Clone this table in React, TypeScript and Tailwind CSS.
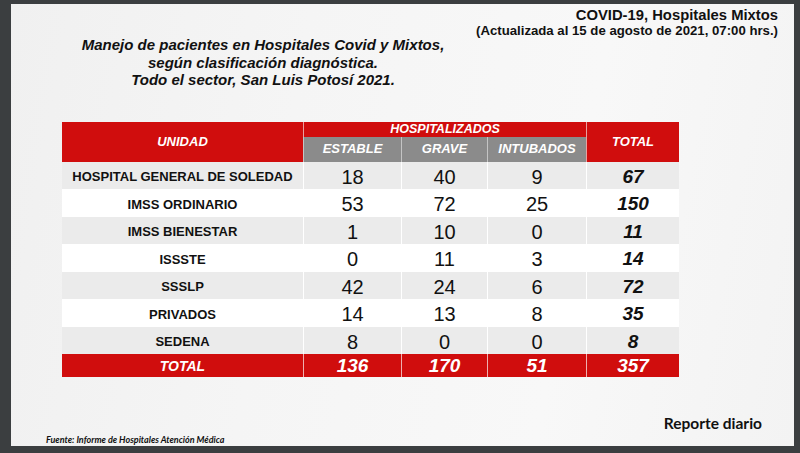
import React from "react";

const rows = [
  { name: "HOSPITAL GENERAL DE SOLEDAD", estable: 18, grave: 40, intubados: 9, total: 67 },
  { name: "IMSS ORDINARIO", estable: 53, grave: 72, intubados: 25, total: 150 },
  { name: "IMSS BIENESTAR", estable: 1, grave: 10, intubados: 0, total: 11 },
  { name: "ISSSTE", estable: 0, grave: 11, intubados: 3, total: 14 },
  { name: "SSSLP", estable: 42, grave: 24, intubados: 6, total: 72 },
  { name: "PRIVADOS", estable: 14, grave: 13, intubados: 8, total: 35 },
  { name: "SEDENA", estable: 8, grave: 0, intubados: 0, total: 8 },
];

const App = () => {
  return (
    <div className="w-[800px] h-[453px] bg-[#3b3e40] pt-[4px] pl-[11px] pr-[6px] pb-[7px] font-['Liberation_Sans',Arial,sans-serif]">
      <div className="h-full flex flex-col bg-[linear-gradient(100deg,#f0f0f0_0%,#f5f5f5_35%,#f8f8f8_70%,#f3f3f3_100%)] text-[#111]">
        {/* header */}
        <div className="flex justify-between items-start">
          <div className="ml-[64px] w-[376px] pt-[32px] text-center text-[15px] leading-[17.5px] font-bold italic whitespace-nowrap">
            <p>Manejo de pacientes en Hospitales Covid y Mixtos,</p>
            <p>según clasificación diagnóstica.</p>
            <p>Todo el sector, San Luis Potosí 2021.</p>
          </div>
          <div className="pr-[16px] pt-[3px] text-right font-bold whitespace-nowrap">
            <p className="text-[14.8px] leading-[16px]">COVID-19, Hospitales Mixtos</p>
            <p className="text-[13.2px] leading-[16px]">(Actualizada al 15 de agosto de 2021, 07:00 hrs.)</p>
          </div>
        </div>

        {/* table */}
        <div className="ml-[51px] mt-[33px] w-[617px] grid grid-cols-[241px_98px_86px_99px_93px] grid-rows-[15px_25px_repeat(7,27.5px)_23px]">
          <div className="row-span-2 bg-[#d00d0d] flex items-center justify-center text-white font-bold italic text-[13px] pt-[1px]">
            UNIDAD
          </div>
          <div className="col-span-3 bg-[#d00d0d] border-l border-[#e8a0a0] flex items-center justify-center text-white font-bold italic text-[12.5px] leading-none">
            HOSPITALIZADOS
          </div>
          <div className="row-span-2 bg-[#d00d0d] border-l border-[#e8a0a0] flex items-center justify-center text-white font-bold italic text-[13px] pt-[1px]">
            TOTAL
          </div>
          {["ESTABLE", "GRAVE", "INTUBADOS"].map((h) => (
            <div
              key={h}
              className="bg-[#8b8b8b] border-l border-[#c4c4c4] flex items-center justify-center text-white font-bold italic text-[13px]"
            >
              {h}
            </div>
          ))}

          {rows.map((r, i) => {
            const bg = i % 2 === 0 ? "bg-[#ebebeb]" : "bg-white";
            return (
              <React.Fragment key={r.name}>
                <div className={`${bg} flex items-center justify-center pt-[3px] font-bold text-[13px]`}>{r.name}</div>
                <div className={`${bg} border-l border-white flex items-center justify-center pt-[3px] text-[20px]`}>{r.estable}</div>
                <div className={`${bg} border-l border-white flex items-center justify-center pt-[3px] text-[20px]`}>{r.grave}</div>
                <div className={`${bg} border-l border-white flex items-center justify-center pt-[3px] text-[20px]`}>{r.intubados}</div>
                <div className={`${bg} border-l border-white flex items-center justify-center pt-[3px] text-[19px] font-bold italic`}>{r.total}</div>
              </React.Fragment>
            );
          })}

          <div className="bg-[#d00d0d] flex items-center justify-center pt-[2px] text-white font-bold italic text-[14px]">TOTAL</div>
          {[136, 170, 51, 357].map((n) => (
            <div
              key={n}
              className="bg-[#d00d0d] border-l border-[#eeb0b0] flex items-center justify-center pt-[2px] text-white font-bold italic text-[19px]"
            >
              {n}
            </div>
          ))}
        </div>

        {/* footer */}
        <div className="mt-auto flex justify-between items-end pb-[1px]">
          <p className="pl-[35px] font-['Lato',sans-serif] font-bold italic text-[9px] leading-[10px]">
            Fuente: Informe de Hospitales Atención Médica
          </p>
          <p className="pr-[32px] mb-[13px] font-['Lato',sans-serif] font-bold text-[15.5px] leading-[18px]">
            Reporte diario
          </p>
        </div>
      </div>
    </div>
  );
};

export default App;
